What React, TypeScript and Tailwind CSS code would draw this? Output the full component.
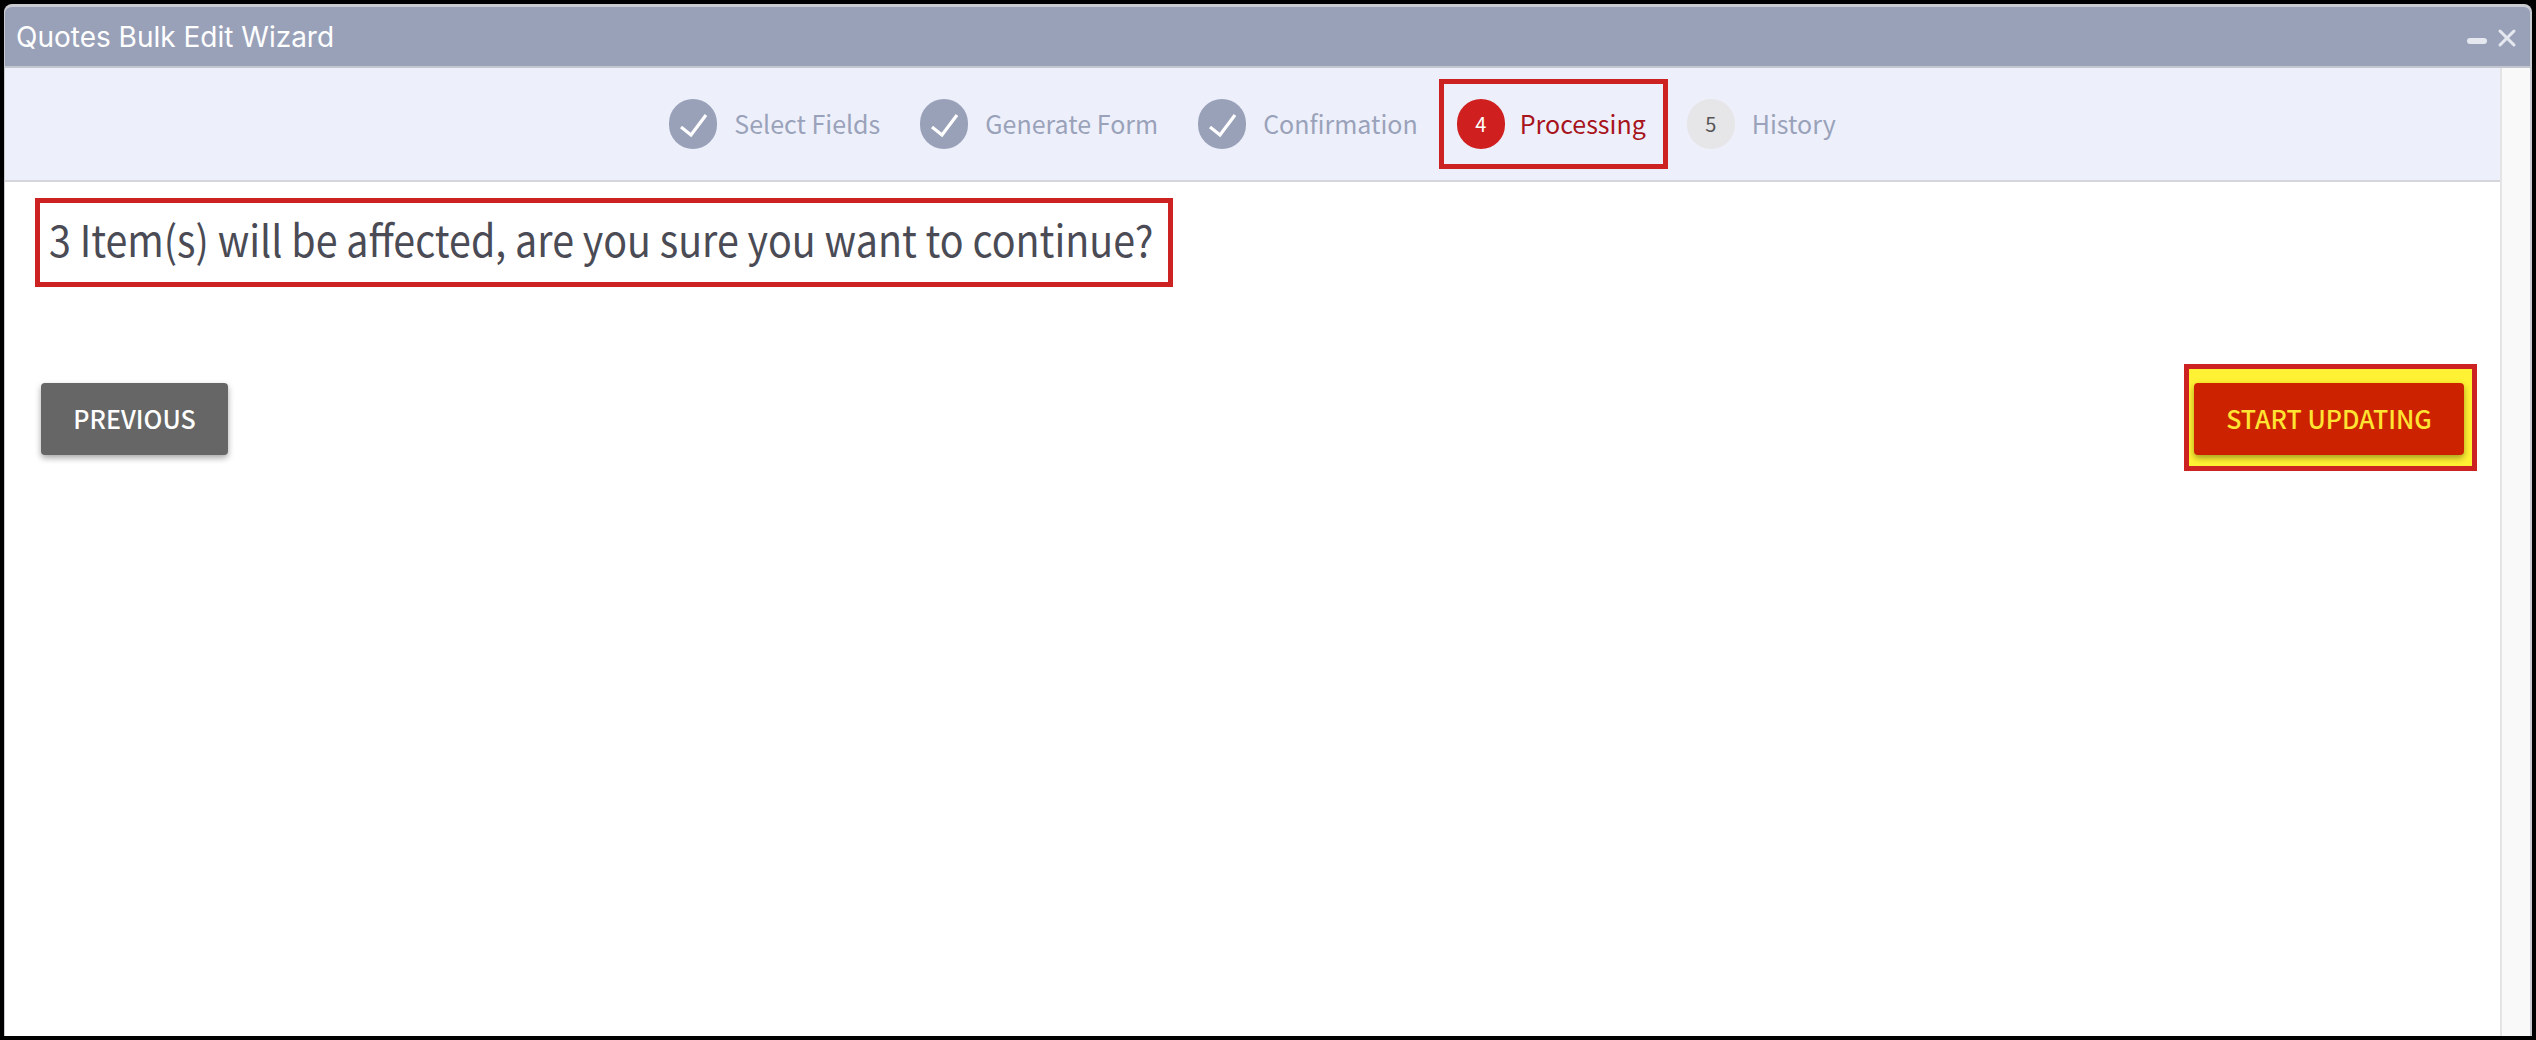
import { X } from 'lucide-react';

const sourceFont = "font-['Noto_Sans_CJK_JP','Noto_Sans',sans-serif]";

const CheckStep = ({ label }: { label: string }) => (
    <div className="flex items-center mr-[40px]">
        <div className="w-[48px] h-[50px] rounded-full bg-[#99a1b9]">
            <svg width="48" height="50" viewBox="0 0 48 50" fill="none" stroke="white" strokeWidth="3.2">
                <path d="M12 28 L22 36 L37 16" />
            </svg>
        </div>
        <span className="ml-[17px] text-[25px] text-[#9aa2ba]">{label}</span>
    </div>
);

const App = () => {
    return (
        <div className={`h-screen bg-black pt-[4px] pr-[4px] pb-[4px] pl-[4px] ${sourceFont}`}>
            <div className="h-full flex flex-col bg-white border-t-[3px] border-l border-r-2 border-[#c9cbd0] overflow-hidden rounded-tl-[8px] rounded-tr-[8px]">
                {/* Title bar */}
                <div className="h-[61px] shrink-0 bg-[#99a1b9] border-b-2 border-[#c3c6cf] flex items-center justify-between pl-[11px] pr-[9px]">
                    <span className="font-['Inter',sans-serif] text-[28px] text-white">Quotes Bulk Edit Wizard</span>
                    <div className="flex items-center gap-[6px]">
                        <div className="w-[20px] h-[6px] mt-[8px] rounded-full bg-[#e6e8f0]" />
                        <X className="w-[28px] h-[28px] mt-[2px] text-[#e6e8f0]" strokeWidth={2.6} />
                    </div>
                </div>

                <div className="flex-1 flex min-h-0">
                    <div className="flex-1 min-w-0">
                        {/* Steps */}
                        <div className="h-[114px] bg-[#edf0fb] border-b-2 border-[#d4d6dc] flex items-center justify-center">
                            <CheckStep label="Select Fields" />
                            <CheckStep label="Generate Form" />
                            <CheckStep label="Confirmation" />
                            <div className="flex items-center h-[90px] border-[5px] border-[#cc2222] pl-[13px] pr-[17px] -ml-[19px] mr-[19px]">
                                <div className="w-[48px] h-[50px] rounded-full bg-[#cf1f1f] flex items-center justify-center text-[20px] text-white">4</div>
                                <span className="ml-[15px] text-[25px] text-[#a8141c]">Processing</span>
                            </div>
                            <div className="flex items-center">
                                <div className="w-[48px] h-[50px] rounded-full bg-[#e6e6e8] flex items-center justify-center text-[20px] text-[#555555]">5</div>
                                <span className="ml-[17px] text-[25px] text-[#9aa2ba]">History</span>
                            </div>
                        </div>

                        {/* Message */}
                        <div className="mt-[16px] ml-[30px] w-[1138px] h-[89px] border-[5px] border-[#cc2222] flex items-center pl-[9px] pb-[10px]">
                            <span className="inline-block text-[39.4px] whitespace-nowrap text-[#4a4b55] scale-y-110">3 Item(s) will be affected, are you sure you want to continue?</span>
                        </div>

                        {/* Buttons */}
                        <div className="mt-[77px] flex items-start justify-between pl-[36px] pr-[23px]">
                            <button className="mt-[19px] w-[187px] h-[72px] rounded-[4px] bg-[#666666] text-white text-[25px] font-medium shadow-[0_3px_6px_rgba(0,0,0,0.35)]">
                                PREVIOUS
                            </button>
                            <div className="border-[5px] border-[#cc2222] bg-[#fff133] pt-[14px] pr-[8px] pb-[11px] pl-[5px]">
                                <button className="block w-[270px] h-[72px] rounded-[4px] bg-[#cc2200] text-[#ffe433] text-[25px] font-medium shadow-[0_3px_6px_rgba(0,0,0,0.35)]">
                                    START UPDATING
                                </button>
                            </div>
                        </div>
                    </div>

                    {/* Scrollbar track */}
                    <div className="w-[30px] shrink-0 bg-[#f9f9f9] border-l-2 border-[#e4e4e4]" />
                </div>
            </div>
        </div>
    );
};

export default App;
